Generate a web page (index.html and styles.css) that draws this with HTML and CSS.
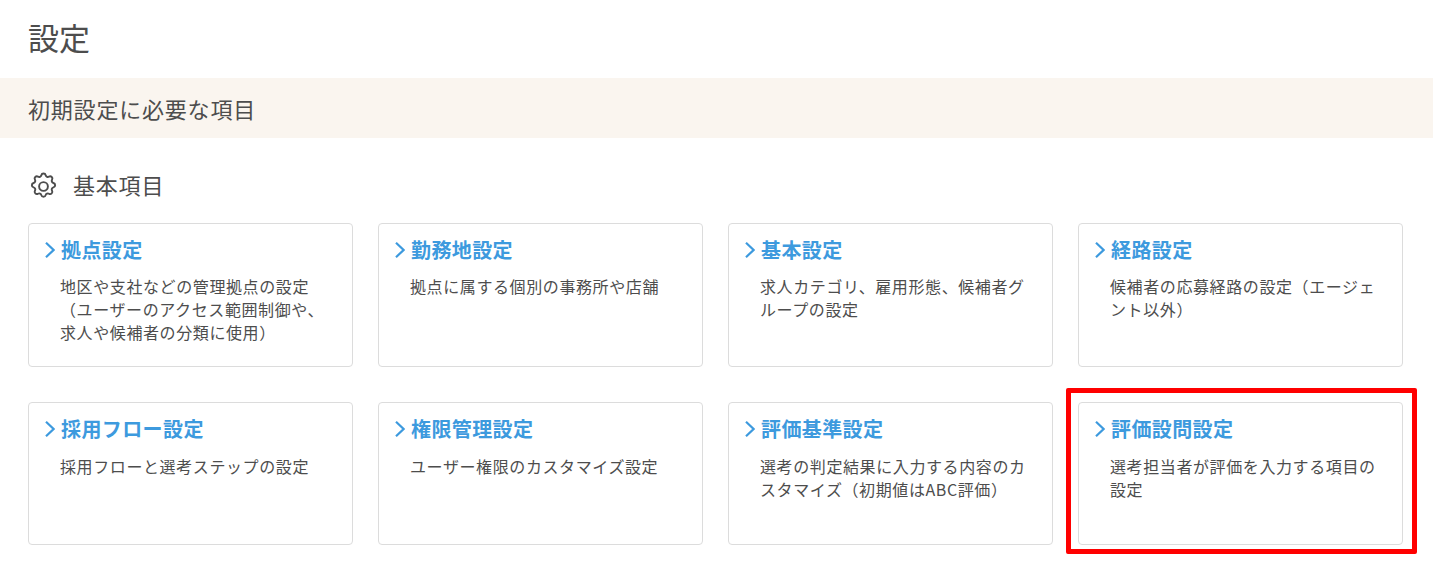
FILE: index.html
```html
<!DOCTYPE html>
<html lang="ja">
<head>
<meta charset="utf-8">
<title>設定</title>
<link rel="stylesheet" href="styles.css">
</head>
<body>
<h1 class="page-title">設定</h1>
<h2 class="banner">初期設定に必要な項目</h2>
<h3 class="section-head">
  <svg class="gear" viewBox="0 0 24 24" fill="none" stroke="currentColor" stroke-width="1.5" stroke-linejoin="round" stroke-linecap="round" aria-hidden="true">
    <path d="M10.33 3.32c.43-1.76 2.93-1.76 3.35 0a1.72 1.72 0 0 0 2.57 1.06c1.54-.94 3.3.83 2.37 2.37a1.72 1.72 0 0 0 1.06 2.57c1.76.43 1.76 2.93 0 3.35a1.72 1.72 0 0 0-1.07 2.57c.94 1.54-.83 3.3-2.37 2.37a1.72 1.72 0 0 0-2.57 1.06c-.43 1.76-2.93 1.76-3.35 0a1.72 1.72 0 0 0-2.57-1.07c-1.54.94-3.3-.83-2.37-2.37a1.72 1.72 0 0 0-1.06-2.57c-1.76-.43-1.76-2.93 0-3.35a1.72 1.72 0 0 0 1.07-2.57c-.94-1.54.83-3.3 2.37-2.37 1 .6 2.3.07 2.57-1.06z"/>
    <circle cx="12" cy="12" r="3.4"/>
  </svg>
  基本項目
</h3>
<div class="grid">
  <a class="card">
    <div class="card-title"><svg class="chev" viewBox="0 0 10 16" aria-hidden="true"><path d="M1 .8 8.6 8 1 15.2"/></svg>拠点設定</div>
    <p class="card-text">地区や支社などの管理拠点の設定<br>（ユーザーのアクセス範囲制御や、求人や候補者の分類に使用）</p>
  </a>
  <a class="card">
    <div class="card-title"><svg class="chev" viewBox="0 0 10 16" aria-hidden="true"><path d="M1 .8 8.6 8 1 15.2"/></svg>勤務地設定</div>
    <p class="card-text">拠点に属する個別の事務所や店舗</p>
  </a>
  <a class="card">
    <div class="card-title"><svg class="chev" viewBox="0 0 10 16" aria-hidden="true"><path d="M1 .8 8.6 8 1 15.2"/></svg>基本設定</div>
    <p class="card-text">求人カテゴリ、雇用形態、候補者グループの設定</p>
  </a>
  <a class="card">
    <div class="card-title"><svg class="chev" viewBox="0 0 10 16" aria-hidden="true"><path d="M1 .8 8.6 8 1 15.2"/></svg>経路設定</div>
    <p class="card-text">候補者の応募経路の設定（エージェント以外）</p>
  </a>
  <a class="card">
    <div class="card-title"><svg class="chev" viewBox="0 0 10 16" aria-hidden="true"><path d="M1 .8 8.6 8 1 15.2"/></svg>採用フロー設定</div>
    <p class="card-text">採用フローと選考ステップの設定</p>
  </a>
  <a class="card">
    <div class="card-title"><svg class="chev" viewBox="0 0 10 16" aria-hidden="true"><path d="M1 .8 8.6 8 1 15.2"/></svg>権限管理設定</div>
    <p class="card-text">ユーザー権限のカスタマイズ設定</p>
  </a>
  <a class="card">
    <div class="card-title"><svg class="chev" viewBox="0 0 10 16" aria-hidden="true"><path d="M1 .8 8.6 8 1 15.2"/></svg>評価基準設定</div>
    <p class="card-text">選考の判定結果に入力する内容のカスタマイズ（初期値はABC評価）</p>
  </a>
  <a class="card highlighted">
    <div class="card-title"><svg class="chev" viewBox="0 0 10 16" aria-hidden="true"><path d="M1 .8 8.6 8 1 15.2"/></svg>評価設問設定</div>
    <p class="card-text">選考担当者が評価を入力する項目の設定</p>
    <span class="marker"></span>
  </a>
</div>
</body>
</html>
```
FILE: styles.css
```css
* { box-sizing: border-box; }
html, body { margin: 0; padding: 0; }
body {
  width: 1433px;
  height: 565px;
  overflow: hidden;
  background: #fff;
  color: #4d4d4d;
  font-family: "Noto Sans CJK JP", "Noto Sans", sans-serif;
}
.page-title {
  margin: 0;
  padding: 0 28px;
  height: 78px;
  font-size: 31px;
  font-weight: 400;
  line-height: 74px;
}
.banner {
  margin: 0;
  padding: 0 28px;
  height: 60px;
  background: #faf5ef;
  font-size: 22px;
  font-weight: 400;
  line-height: 60px;
  letter-spacing: 0.8px;
}
.section-head {
  display: flex;
  align-items: center;
  margin: 0;
  padding: 6px 30px 0 28px;
  height: 85px;
  gap: 14px;
  font-size: 22px;
  font-weight: 400;
  letter-spacing: 0.8px;
}
.gear {
  flex: none;
  width: 31px;
  height: 31px;
  margin-top: 6px;
}
.grid {
  display: grid;
  grid-template-columns: repeat(4, 325px);
  grid-template-rows: 144px 143px;
  column-gap: 25px;
  row-gap: 35.4px;
  padding: 0 28px;
}
.card {
  position: relative;
  display: block;
  padding: 12px 22px 0 31px;
  border: 1px solid #dcdcdc;
  border-radius: 4px;
  background: #fff;
}
.card-title {
  position: relative;
  left: 1px;
  font-size: 20px;
  font-weight: 700;
  line-height: 28px;
  letter-spacing: 0.4px;
  color: #3d9ade;
}
.chev {
  position: absolute;
  left: -16px;
  top: 6px;
  width: 10px;
  height: 16px;
  fill: none;
  stroke: #3d9ade;
  stroke-width: 2.2;
}
.card-text {
  margin: 11.3px 0 0;
  font-size: 16px;
  line-height: 23px;
  letter-spacing: 0.6px;
  color: #4d4d4d;
}
.marker {
  position: absolute;
  left: -13px;
  top: -15px;
  width: 351px;
  height: 166px;
  border: 5px solid #ff0000;
  border-radius: 2px;
  pointer-events: none;
}
```
